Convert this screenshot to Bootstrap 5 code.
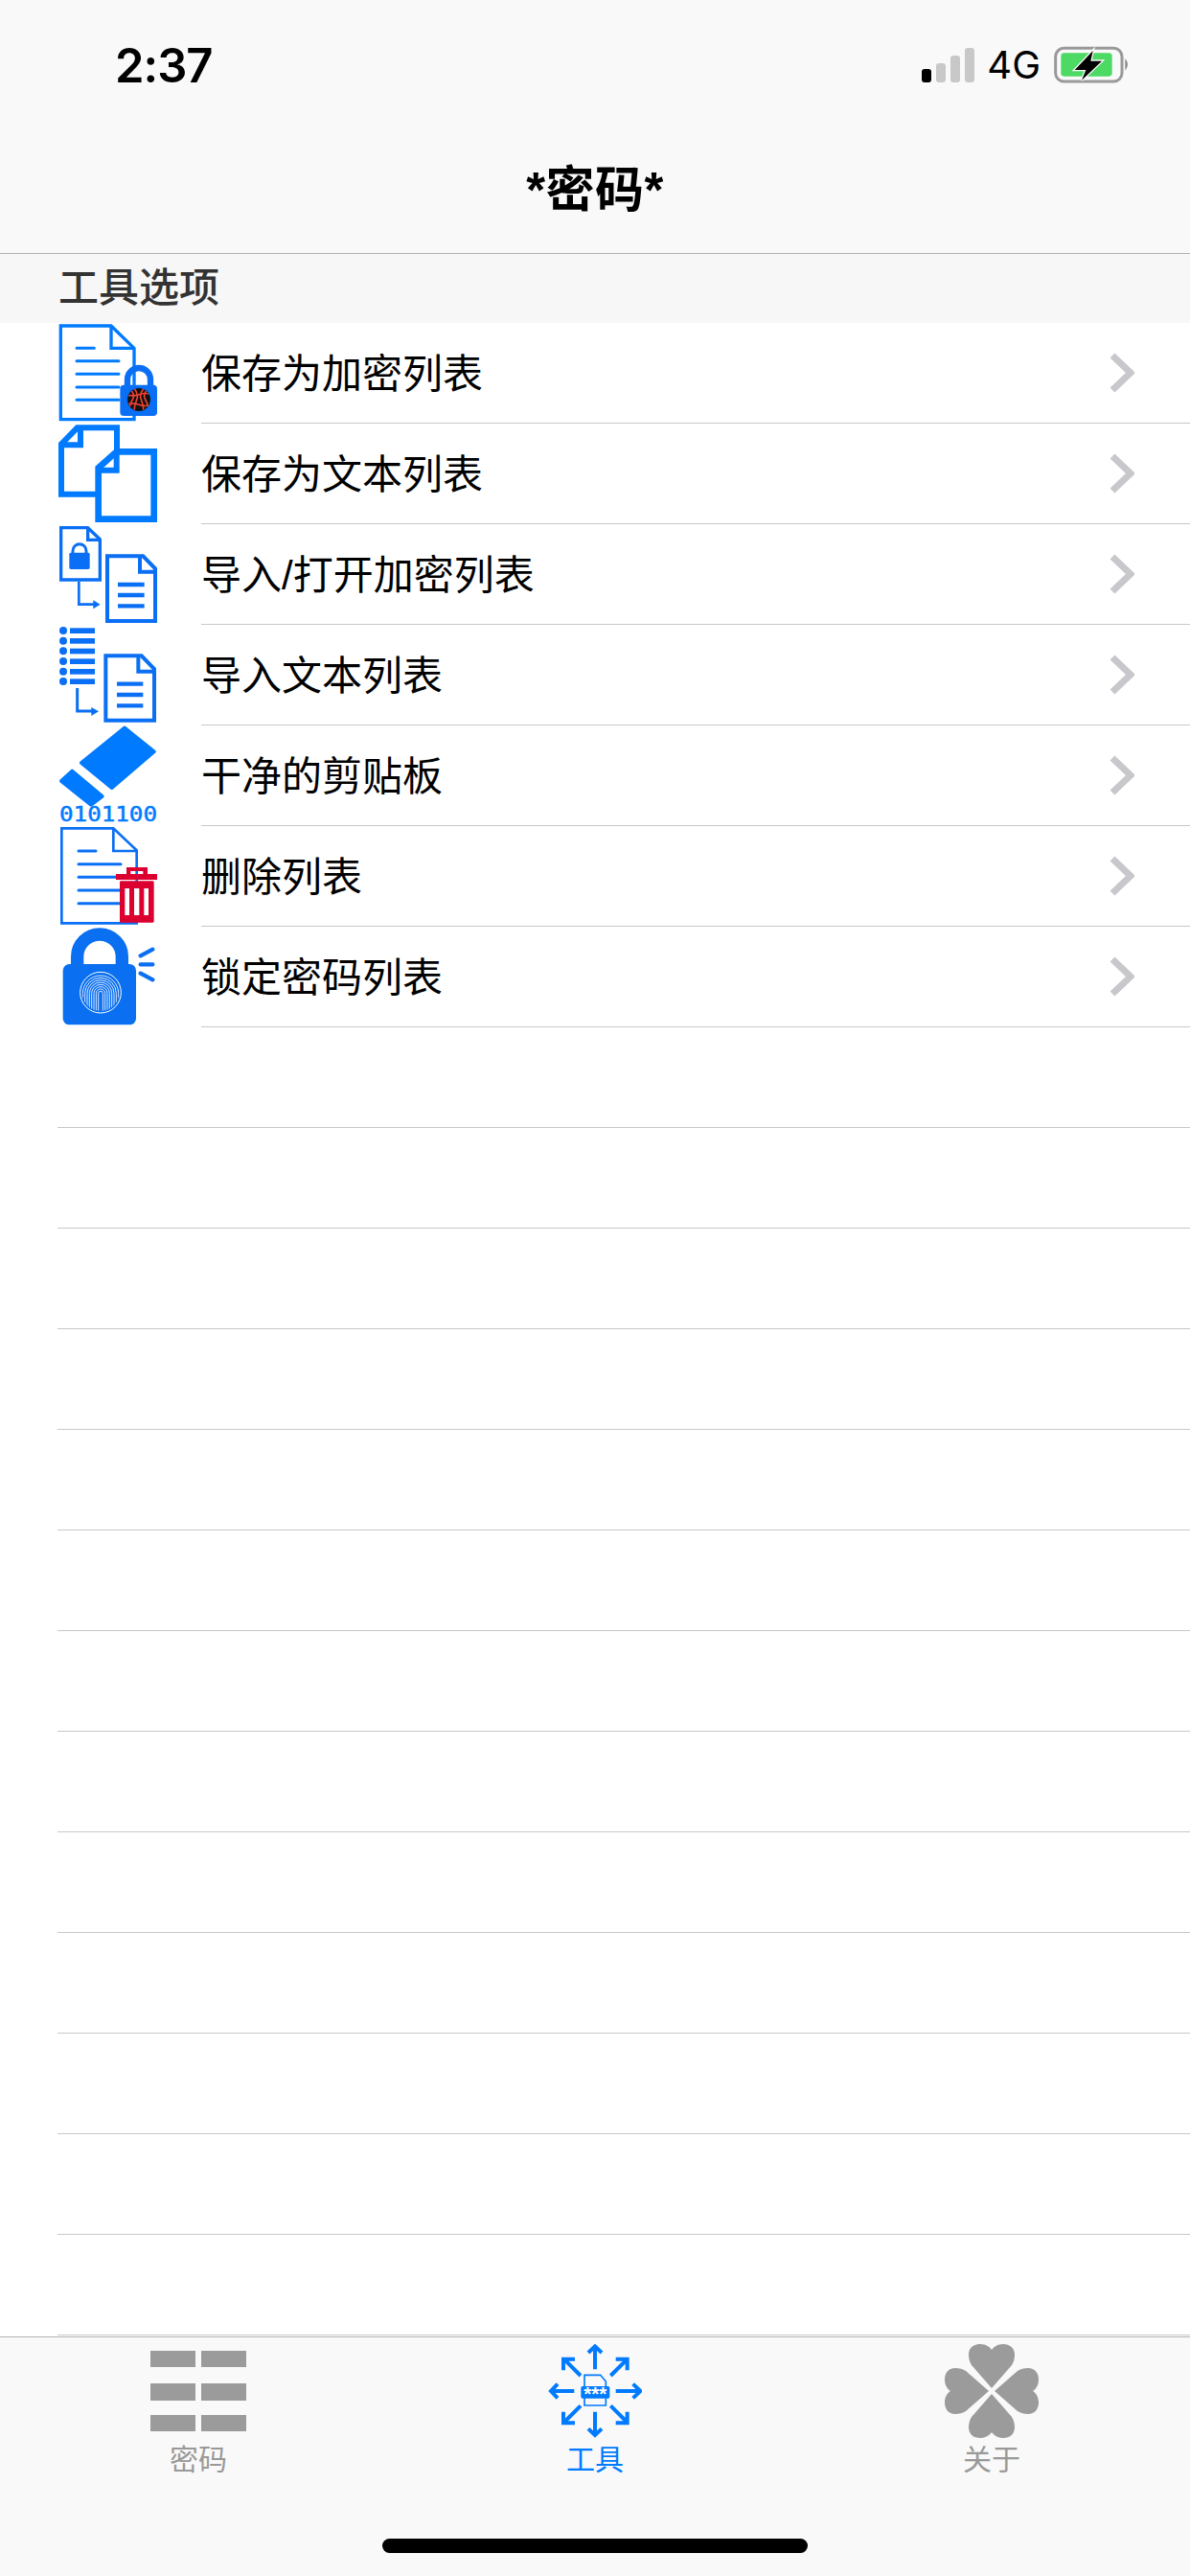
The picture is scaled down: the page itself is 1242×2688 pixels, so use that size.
<!doctype html>
<html lang="zh">
  <head>
    <meta charset="utf-8">
    <meta name="viewport" content="width=device-width, initial-scale=1">
    <title>密码</title>
    <link href="https://cdn.jsdelivr.net/npm/bootstrap@5.3.3/dist/css/bootstrap.min.css" rel="stylesheet">
    <style>
        body {
            background-color: #fff;
            color: #000;
            font-family: "Liberation Sans", "Noto Sans CJK SC", sans-serif;
        }

        .top-area {
            background-color: #f9f9f9;
            border-bottom: 1px solid #b2b2b2;
            height: 265px;
        }

        .status-row {
            height: 136px;
            padding-left: 120px;
            padding-right: 62px;
        }

        .status-time {
            font-family: Inter, "Liberation Sans", sans-serif;
            font-size: 49px;
            font-weight: 600;
            letter-spacing: -1px;
            line-height: 1;
        }

        .status-net {
            font-family: Inter, "Liberation Sans", sans-serif;
            font-size: 40px;
            line-height: 1;
            margin: 0 14px 0 13px;
        }

        .top-title {
            font-size: 51px;
            font-weight: 600;
            letter-spacing: .5px;
            line-height: 1;
            height: 124px;
        }

        .section-head {
            background-color: #f7f7f7;
            color: #333;
            font-size: 42px;
            font-weight: 500;
            line-height: 72px;
            height: 72px;
            padding-left: 61px;
        }

        .tool-row {
            height: 105px;
            padding-left: 50px;
        }

        .tool-icon {
            width: 120px;
            height: 105px;
            flex-shrink: 0;
            overflow: visible;
        }

        .tool-body {
            margin-left: 40px;
            padding-right: 58px;
            font-size: 42px;
            line-height: 1;
            border-bottom: 1px solid #c8c7cc;
        }

        .tool-text {
            margin-top: 3px;
        }

        .empty-row {
            height: 105px;
            margin-left: 60px;
            border-bottom: 1px solid #c8c7cc;
        }

        .tab-area {
            background-color: #f9f9f9;
            border-top: 1px solid #b2b2b2;
            height: 250px;
            color: #999;
        }

        .tab-cell {
            padding-top: 7px;
            font-size: 30px;
            line-height: 1;
        }

        .tab-cell svg {
            display: block;
            margin: 0 auto 8px;
        }

        .tab-active {
            color: #007aff;
        }

        .home-bar {
            width: 444px;
            height: 15px;
            background-color: #000;
            border-radius: 8px;
            margin: 67px auto 0;
        }
    </style>
  </head>
  <body>
    <div class="d-flex flex-column min-vh-100">
      <header class="top-area">
        <div class="status-row d-flex align-items-center justify-content-between">
          <span class="status-time">2:37</span>
          <div class="d-flex align-items-center">
            <svg width="55" height="36" viewBox="0 0 55 36">
              <rect x="0" y="22" width="10" height="14" rx="3" fill="#000"/>
              <rect x="15" y="16" width="10" height="20" rx="3" fill="#c8c8c8"/>
              <rect x="30" y="8" width="10" height="28" rx="3" fill="#c8c8c8"/>
              <rect x="45" y="0" width="10" height="36" rx="3" fill="#c8c8c8"/>
            </svg>
            <span class="status-net">4G</span>
            <svg width="80" height="40" viewBox="475 53 240 120">
              <rect x="480" y="60" width="208" height="104" rx="26" fill="none" stroke="#999" stroke-width="9"/>
              <rect x="497" y="75" width="160" height="73" rx="10" fill="#4cd964"/>
              <path d="M698 92 Q714 111 698 130 Z" fill="#888"/>
              <path d="M597 68 L540 128 H575 L562 160 L625 100 H590 Z" fill="#000" stroke="#f9f9f9" stroke-width="8" paint-order="stroke"/>
            </svg>
          </div>
        </div>
        <div class="top-title d-flex align-items-center justify-content-center">*密码*</div>
      </header>

      <main class="flex-grow-1">
        <div class="section-head">工具选项</div>

        <div class="tool-row d-flex">
          <svg class="tool-icon" viewBox="30 21 360 315">
            <path d="M70 30 H228 L300 100 V323 H70 Z" fill="#fff" stroke="#007aff" stroke-width="10"/>
            <path d="M228 30 V100 H300" fill="none" stroke="#007aff" stroke-width="10"/>
            <path d="M120 100 H175 M120 140 H252 M120 181 H252 M120 222 H252 M120 262 H252" stroke="#007aff" stroke-width="9" stroke-linecap="round"/>
            <path d="M279 222 V198 A36 36 0 0 1 351 198 V222" fill="none" stroke="#0a6ff5" stroke-width="19"/>
            <rect x="256" y="215" width="116" height="97" rx="12" fill="#0a6ff5"/>
            <clipPath id="lockFace"><circle cx="315" cy="261" r="35"/></clipPath>
            <circle cx="315" cy="261" r="36" fill="#111"/>
            <g clip-path="url(#lockFace)" fill="none" stroke="#f04030" stroke-width="5">
              <path d="M285 225 Q305 245 295 261 T285 297"/>
              <path d="M300 225 Q315 245 308 261 T300 297"/>
              <path d="M330 225 Q315 245 322 261 T330 297"/>
              <path d="M345 225 Q325 245 335 261 T345 297"/>
              <path d="M275 245 Q295 252 315 245 T355 245"/>
              <path d="M275 277 Q295 270 315 277 T355 277"/>
            </g>
          </svg>
          <div class="tool-body flex-grow-1 d-flex align-items-center justify-content-between">
            <span class="tool-text">保存为加密列表</span>
            <svg width="26" height="42" viewBox="0 0 26 42"><path d="M3 3 L22 21 L3 39" fill="none" stroke="#c7c7cc" stroke-width="7"/></svg>
          </div>
        </div>

        <div class="tool-row d-flex">
          <svg class="tool-icon" viewBox="30 336 360 315">
            <path d="M72 400 L122 349 H246 V557 H72 Z" fill="#fff" stroke="#007aff" stroke-width="18"/>
            <path d="M72 403 H132 V349" fill="none" stroke="#007aff" stroke-width="18"/>
            <path d="M188 475 L245 424 H362 V635 H188 Z" fill="#fff" stroke="#007aff" stroke-width="20"/>
            <path d="M188 482 H245 V424" fill="none" stroke="#007aff" stroke-width="18"/>
          </svg>
          <div class="tool-body flex-grow-1 d-flex align-items-center justify-content-between">
            <span class="tool-text">保存为文本列表</span>
            <svg width="26" height="42" viewBox="0 0 26 42"><path d="M3 3 L22 21 L3 39" fill="none" stroke="#c7c7cc" stroke-width="7"/></svg>
          </div>
        </div>

        <div class="tool-row d-flex">
          <svg class="tool-icon" viewBox="30 21 360 315">
            <path d="M71 32 H155 L193 68 V195 H71 Z" fill="#fff" stroke="#0a6ff5" stroke-width="10"/>
            <path d="M155 32 V70 H193" fill="none" stroke="#0a6ff5" stroke-width="10"/>
            <path d="M108 114 V104 A21 21 0 0 1 150 104 V114" fill="none" stroke="#0a6ff5" stroke-width="9"/>
            <rect x="97" y="110" width="64" height="52" rx="5" fill="#0a6ff5"/>
            <path d="M127 200 V272 H175" fill="none" stroke="#0a6ff5" stroke-width="8"/>
            <path d="M172 259 L194 272 L172 286 Z" fill="#0a6ff5"/>
            <path d="M216 121 H328 L366 160 V324 H216 Z" fill="#fff" stroke="#0a6ff5" stroke-width="12"/>
            <path d="M318 125 V170 H366" fill="none" stroke="#0a6ff5" stroke-width="12"/>
            <path d="M249 210 H332 M249 243 H332 M249 277 H332" stroke="#0a6ff5" stroke-width="13"/>
          </svg>
          <div class="tool-body flex-grow-1 d-flex align-items-center justify-content-between">
            <span class="tool-text">导入/打开加密列表</span>
            <svg width="26" height="42" viewBox="0 0 26 42"><path d="M3 3 L22 21 L3 39" fill="none" stroke="#c7c7cc" stroke-width="7"/></svg>
          </div>
        </div>

        <div class="tool-row d-flex">
          <svg class="tool-icon" viewBox="30 336 360 315">
            <g fill="#0a6ff5">
              <circle cx="78" cy="354" r="12"/><circle cx="78" cy="386" r="12"/><circle cx="78" cy="418" r="12"/>
              <circle cx="78" cy="450" r="12"/><circle cx="78" cy="482" r="12"/><circle cx="78" cy="513" r="12"/>
              <rect x="99" y="346" width="78" height="17"/><rect x="99" y="378" width="78" height="17"/><rect x="99" y="410" width="78" height="17"/>
              <rect x="99" y="442" width="78" height="17"/><rect x="99" y="474" width="78" height="17"/><rect x="99" y="505" width="78" height="17"/>
              <path d="M166 594 L189 607 L166 621 Z"/>
            </g>
            <path d="M122 534 V606 H170" fill="none" stroke="#0a6ff5" stroke-width="9"/>
            <path d="M211 433 H323 L363 474 V635 H211 Z" fill="#fff" stroke="#0a6ff5" stroke-width="12"/>
            <path d="M313 437 V482 H363" fill="none" stroke="#0a6ff5" stroke-width="12"/>
            <path d="M246 521 H328 M246 555 H328 M246 589 H328" stroke="#0a6ff5" stroke-width="13"/>
          </svg>
          <div class="tool-body flex-grow-1 d-flex align-items-center justify-content-between">
            <span class="tool-text">导入文本列表</span>
            <svg width="26" height="42" viewBox="0 0 26 42"><path d="M3 3 L22 21 L3 39" fill="none" stroke="#c7c7cc" stroke-width="7"/></svg>
          </div>
        </div>

        <div class="tool-row d-flex">
          <svg class="tool-icon" viewBox="30 21 360 315">
            <path d="M135 138 L270 29 L362 103 L230 216 Z" fill="#007aff" stroke="#007aff" stroke-width="12" stroke-linejoin="round"/>
            <path d="M106 164 L200 243 L165 269 L72 195 Z" fill="#007aff" stroke="#007aff" stroke-width="12" stroke-linejoin="round"/>
            <text x="66" y="322" font-family="DejaVu Sans Mono, Liberation Mono, monospace" font-size="66" fill="#007aff" stroke="#007aff" stroke-width="1.5" textLength="306" lengthAdjust="spacingAndGlyphs">0101100</text>
          </svg>
          <div class="tool-body flex-grow-1 d-flex align-items-center justify-content-between">
            <span class="tool-text">干净的剪贴板</span>
            <svg width="26" height="42" viewBox="0 0 26 42"><path d="M3 3 L22 21 L3 39" fill="none" stroke="#c7c7cc" stroke-width="7"/></svg>
          </div>
        </div>

        <div class="tool-row d-flex">
          <svg class="tool-icon" viewBox="30 336 360 315">
            <path d="M73 343 H235 L308 412 V640 H73 Z" fill="#fff" stroke="#0a6ff5" stroke-width="8"/>
            <path d="M235 343 V414 H308" fill="none" stroke="#0a6ff5" stroke-width="8"/>
            <path d="M126 414 H180 M126 455 H258 M126 496 H258 M126 537 H258 M126 578 H258" stroke="#0a6ff5" stroke-width="9" stroke-linecap="round"/>
            <path d="M276 490 V465 H342 V490 H328 V477 H289 V490 Z" fill="#dc0030"/>
            <rect x="243" y="486" width="129" height="18" fill="#dc0030"/>
            <rect x="255" y="508" width="107" height="130" rx="4" fill="#dc0030"/>
            <path d="M271 531 H285 V615 H271 Z M300 531 H316 V615 H300 Z M331 531 H345 V615 H331 Z" fill="#fff"/>
          </svg>
          <div class="tool-body flex-grow-1 d-flex align-items-center justify-content-between">
            <span class="tool-text">删除列表</span>
            <svg width="26" height="42" viewBox="0 0 26 42"><path d="M3 3 L22 21 L3 39" fill="none" stroke="#c7c7cc" stroke-width="7"/></svg>
          </div>
        </div>

        <div class="tool-row d-flex">
          <svg class="tool-icon" viewBox="30 651 360 315">
            <path d="M122 785 V745 A70 70 0 0 1 262 745 V785" fill="none" stroke="#0a6ff0" stroke-width="40"/>
            <rect x="77" y="768" width="229" height="190" rx="20" fill="#0a6ff0"/>
            <path d="M320 742 L358 722 M320 769 H358 M320 797 L358 817" stroke="#0a6ff0" stroke-width="13" stroke-linecap="round"/>
            <clipPath id="printFace"><circle cx="195" cy="857" r="58"/></clipPath>
            <circle cx="195" cy="857" r="64" fill="none" stroke="#fff" stroke-width="3"/>
            <g clip-path="url(#printFace)" fill="none" stroke="#fff" stroke-width="2.5">
              <path d="M188 925 V860 A7 7 0 0 1 202 860 V925"/>
              <path d="M181 925 V860 A14 14 0 0 1 209 860 V925"/>
              <path d="M174 925 V860 A21 21 0 0 1 216 860 V925"/>
              <path d="M167 925 V860 A28 28 0 0 1 223 860 V925"/>
              <path d="M160 925 V860 A35 35 0 0 1 230 860 V925"/>
              <path d="M153 925 V860 A42 42 0 0 1 237 860 V925"/>
              <path d="M146 925 V860 A49 49 0 0 1 244 860 V925"/>
              <path d="M139 925 V860 A56 56 0 0 1 251 860 V925"/>
            </g>
          </svg>
          <div class="tool-body flex-grow-1 d-flex align-items-center justify-content-between">
            <span class="tool-text">锁定密码列表</span>
            <svg width="26" height="42" viewBox="0 0 26 42"><path d="M3 3 L22 21 L3 39" fill="none" stroke="#c7c7cc" stroke-width="7"/></svg>
          </div>
        </div>

        <div class="empty-row"></div>
        <div class="empty-row"></div>
        <div class="empty-row"></div>
        <div class="empty-row"></div>
        <div class="empty-row"></div>
        <div class="empty-row"></div>
        <div class="empty-row"></div>
        <div class="empty-row"></div>
        <div class="empty-row"></div>
        <div class="empty-row"></div>
        <div class="empty-row"></div>
        <div class="empty-row"></div>
        <div class="empty-row"></div>
      </main>

      <footer class="tab-area">
        <div class="row g-0 text-center">
          <div class="col-4 tab-cell">
            <svg width="100" height="98" viewBox="0 0 100 98" fill="#9b9b9b">
              <rect x="0" y="7" width="47" height="17"/><rect x="53" y="7" width="47" height="17"/>
              <rect x="0" y="41" width="47" height="18"/><rect x="53" y="41" width="47" height="18"/>
              <rect x="0" y="74" width="47" height="17"/><rect x="53" y="74" width="47" height="17"/>
            </svg>
            密码
          </div>
          <div class="col-4 tab-cell tab-active">
            <svg width="98" height="98" viewBox="36 33 294 294">
              <g fill="none" stroke="#007aff" stroke-width="12">
                <path d="M183 112 V42 M162 60 L183 40 L204 60"/>
                <path d="M183 245 V318 M162 298 L183 318 L204 298"/>
                <path d="M118 180 H48 M66 158 L45 180 L66 202"/>
                <path d="M248 180 H320 M302 158 L325 180 L302 202"/>
                <path d="M138 132 L88 82 M84 115 V80 H120"/>
                <path d="M232 132 L282 82 M248 80 H284 V115"/>
                <path d="M138 226 L88 276 M84 245 V280 H120"/>
                <path d="M232 226 L282 276 M248 280 H284 V245"/>
              </g>
              <path d="M150 130 H200 L217 150 V225 H150 Z" fill="#f9f9f9" stroke="#007aff" stroke-width="5"/>
              <rect x="139" y="165" width="90" height="38" rx="5" fill="#007aff"/>
              <text x="184" y="210" text-anchor="middle" font-family="Liberation Sans, sans-serif" font-size="62" font-weight="700" fill="#fff">***</text>
            </svg>
            工具
          </div>
          <div class="col-4 tab-cell">
            <svg width="100" height="98" viewBox="0 0 100 98" fill="#9b9b9b">
              <g id="cloverLeaf"><path d="M50 46 L29 22 C27 19 26 15 26 11 C26 4 31 0 38 0 C44 0 48 3 50 6 C52 3 56 0 62 0 C69 0 74 4 74 11 C74 15 73 19 71 22 Z"/></g>
              <use href="#cloverLeaf" transform="rotate(90 50 49)"/>
              <use href="#cloverLeaf" transform="rotate(180 50 49)"/>
              <use href="#cloverLeaf" transform="rotate(270 50 49)"/>
            </svg>
            关于
          </div>
        </div>
        <div class="home-bar"></div>
      </footer>
    </div>
    <script src="https://cdn.jsdelivr.net/npm/bootstrap@5.3.3/dist/js/bootstrap.bundle.min.js"></script>
  </body>
</html>
